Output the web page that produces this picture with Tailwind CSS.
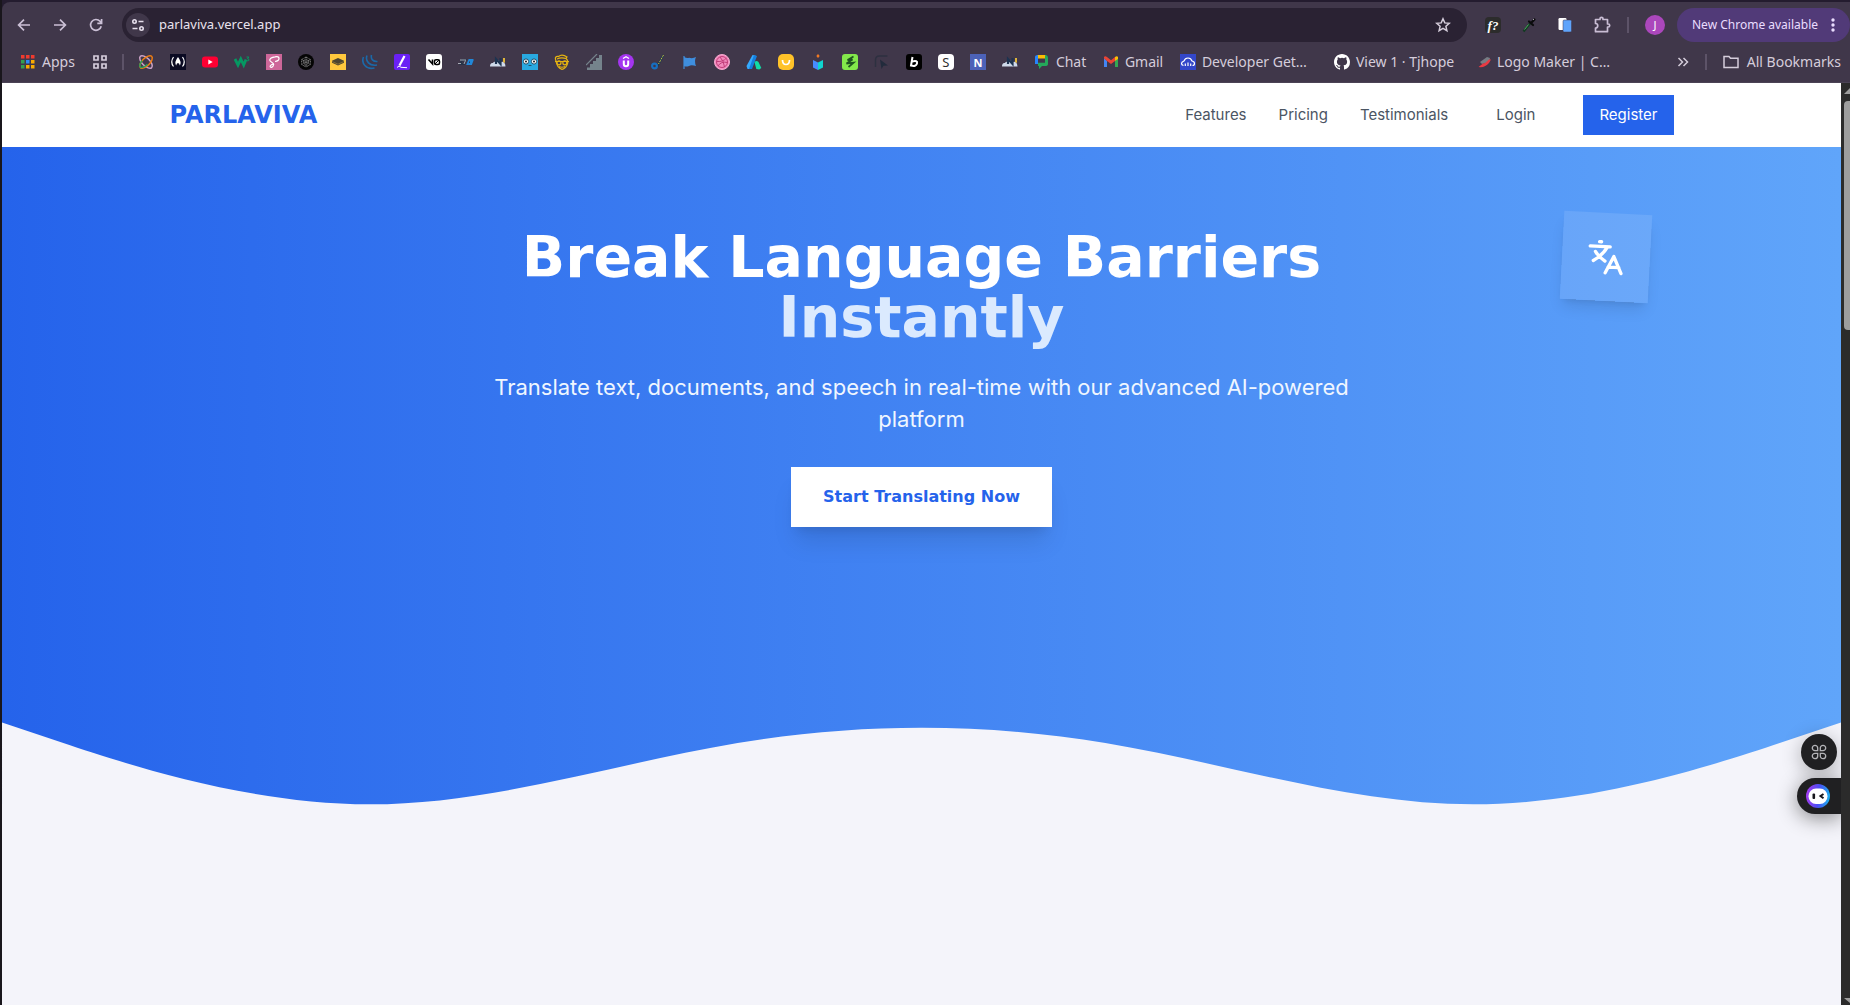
<!DOCTYPE html>
<html lang="en">
<head>
<meta charset="utf-8">
<meta name="viewport" content="width=device-width, initial-scale=1">
<title>Parlaviva</title>
<script src="https://cdn.jsdelivr.net/npm/@tailwindcss/browser@4"></script>
</head>
<body class="flex h-screen flex-col overflow-hidden bg-[#19161c] pl-[2px] font-['Inter',sans-serif]">

<!-- Browser toolbar -->
<div class="shrink-0 bg-[#241c2f] pt-[2px]">
  <header class="flex h-[81px] flex-col rounded-tl-lg border-b border-[#4b4355] bg-[#40374a] font-['Noto_Sans',sans-serif] text-[#d5cddb]">
    <div class="flex h-[46px] items-center">
      <div class="flex w-[120px] shrink-0 items-center gap-5 pl-[14px] text-[#cbc0d6]">
        <button aria-label="Back" class="size-4"><svg viewBox="0 0 16 16" class="size-4" fill="none" stroke="currentColor" stroke-width="1.7"><path d="M14 8H2.8M8 2.6 2.6 8 8 13.4"/></svg></button>
        <button aria-label="Forward" class="size-4"><svg viewBox="0 0 16 16" class="size-4" fill="none" stroke="currentColor" stroke-width="1.7"><path d="M2 8h11.2M8 2.6 13.4 8 8 13.4"/></svg></button>
        <button aria-label="Reload" class="size-4"><svg viewBox="0 0 16 16" class="size-4" fill="none" stroke="currentColor" stroke-width="1.7"><path d="M13.2 9.2A5.4 5.4 0 1 1 12 4.3L13.4 6M13.6 2v4.3H9.3"/></svg></button>
      </div>
      <div class="flex h-[34px] min-w-0 flex-1 items-center rounded-full bg-[#2a2233] pl-1 pr-4">
        <button aria-label="Site information" class="grid size-6 place-items-center rounded-full bg-[#40374a] text-[#e6dfec]"><svg viewBox="0 0 16 16" class="size-4" fill="none" stroke="currentColor" stroke-width="1.6"><circle cx="4.500" cy="4.500" r="1.700"/><path d="M8.500 4.500h5M2.500 11.500h5"/><circle cx="11.500" cy="11.500" r="1.700"/></svg></button>
        <input aria-label="Address" value="parlaviva.vercel.app" class="ml-[9px] min-w-0 flex-1 bg-transparent text-[13px] text-[#e9e2ee] outline-none">
        <button aria-label="Bookmark this page"><svg viewBox="0 0 16 16" class="size-4" fill="none" stroke="#d5cddb" stroke-width="1.5"><path d="m8 1.800 1.800 4.100 4.500.4-3.400 3 1 4.400L8 11.400l-3.900 2.300 1-4.400-3.400-3 4.500-.4z"/></svg></button>
      </div>
      <div class="flex shrink-0 items-center pl-[18px]">
        <button aria-label="Font finder" class="grid size-4 place-items-center rounded-sm bg-[#2c2c2c] font-['Liberation_Serif',serif] text-[13px] leading-none font-bold text-white italic">f?</button>
        <button aria-label="Colour picker" class="ml-5"><svg viewBox="0 0 16 16" class="size-4"><path d="M2.500 14.500 9 6.500" stroke="#123b22" stroke-width="2.200"/><path d="m3.500 12.500 4-5" stroke="#4fae62" stroke-width="1"/><path d="m8 4.500 4 3.500M10 6 13.500 2.500" stroke="#0b0b0d" stroke-width="2.200" stroke-linecap="round"/><path d="m12 3 1-1" stroke="#aaa"/></svg></button>
        <button aria-label="Copy" class="ml-5"><svg viewBox="0 0 16 16" class="size-4"><rect x="1.500" y="1" width="8" height="12" rx="1.200" fill="#fff"/><rect x="6" y="3" width="8.500" height="12" rx="1.200" fill="#5fa4fb" stroke="#40374a" stroke-width=".5"/></svg></button>
        <button aria-label="Extensions" class="ml-5"><svg viewBox="0 0 18 18" class="size-[18px]" fill="none" stroke="#c9bdd4" stroke-width="1.700" stroke-linejoin="round"><path d="M2.500 3.500H7V2.800a1.500 1.500 0 0 1 3 0v.7h4.500V8h.7a1.500 1.500 0 0 1 0 3h-.7v4.700h-12V12a2.200 2.200 0 0 0 0-4.500z"/></svg></button>
        <span class="ml-4 h-4 w-[2px] bg-[#5d5368]"></span>
        <button aria-label="Profile" class="ml-4 grid size-5 place-items-center rounded-full bg-[#ab47bc] text-[11px] text-white">J</button>
        <button class="ml-3 flex h-[34px] w-[173px] items-center justify-between rounded-full bg-[#513a78] pr-[15px] pl-[15px] text-xs whitespace-nowrap text-[#eaddff]">New Chrome available
          <svg viewBox="0 0 4 16" class="h-4 w-1" fill="currentColor"><circle cx="2" cy="3" r="1.700"/><circle cx="2" cy="8" r="1.700"/><circle cx="2" cy="13" r="1.700"/></svg></button>
      </div>
    </div>

    <!-- Bookmarks bar -->
    <nav aria-label="Bookmarks" class="flex h-[28px] items-center text-sm whitespace-nowrap">
      <a href="#" class="flex items-center gap-[6px] pl-[18px]"><svg viewBox="0 0 16 16" class="size-4"><path d="M1 1h3.500v3.500H1zM6 1h3.500v3.500H6zM11 1h3.500v3.500H11z" fill="#f03a2e"/><path d="M1 6h3.500v3.500H1zM1 11h3.500v3.500H1z" fill="#34a04f"/><path d="M6 6h3.500v3.500H6z" fill="#2c8bf5"/><path d="M6 11h3.500v3.500H6zM11 6h3.500v3.500H11zM11 11h3.500v3.500H11z" fill="#f9ab00"/></svg>Apps</a>
      <a href="#" aria-label="Tab groups" class="ml-[17px]"><svg viewBox="0 0 16 16" class="size-4" fill="none" stroke="#d5cddb" stroke-width="1.700"><path d="M2 2h4v4H2zM10 2h4v4h-4zM2 10h4v4H2zM10 10h4v4h-4z"/></svg></a>
      <span class="mx-[14px] h-4 w-[2px] bg-[#5d5368]"></span>
      <div class="flex gap-4">
        <a href="#" aria-label="Orbit"><svg viewBox="0 0 16 16" class="size-4" fill="none" stroke-width="1.500"><ellipse cx="8" cy="8" rx="8" ry="3.800" transform="rotate(45 8 8)" stroke="#cfa4c9"/><ellipse cx="8" cy="8" rx="8" ry="3.800" transform="rotate(-45 8 8)" stroke="#ef7d12"/><path d="M4 6.500Q.5 11.500 2.500 13.300q3 1 7-3" stroke="#2a9d5b"/></svg></a>
        <a href="#" aria-label="freeCodeCamp"><svg viewBox="0 0 16 16" class="size-4"><path fill="#0a0a23" d="M0 0h16v16H0z"/><path d="M3.500 3Q0 8 3.500 12.500M12.500 3Q16 8 12.500 12.500" fill="none" stroke="#fff" stroke-width="1.200"/><path d="M8 3Q4 8 6.200 11.500Q6.500 9 8 9t1.800 2.500Q12 8 8 3z" fill="#fff"/></svg></a>
        <a href="#" aria-label="YouTube"><svg viewBox="0 0 16 16" class="size-4"><rect y="2.500" width="16" height="11" rx="3" fill="#ff0033"/><path d="M6.300 5.500v5L10.700 8z" fill="#fff"/></svg></a>
        <a href="#" aria-label="W3Schools"><svg viewBox="0 0 16 16" class="size-4" fill="none" stroke="#059862"><path d="m1 5 3 6 2.800-6 2.900 6L12 5.500" stroke-width="2.800"/><path d="M12.500 3h2.300l-1.300 1.700q2 0 1.200 1.800-1 .7-2 0" stroke-width="1"/></svg></a>
        <a href="#" aria-label="Sass"><svg viewBox="0 0 16 16" class="size-4"><path fill="#cd6799" d="M0 0h16v16H0z"/><path d="M9 7.500q4-.5 4-3T9 2.800q-5 .7-5.300 3.300c0 2 4.300 2.200 4 4.400-.6 3.500-4 3.500-3.500 1.500Q5 10.500 7.500 10" fill="none" stroke="#fff" stroke-width="1.200"/></svg></a>
        <a href="#" aria-label="Perplex"><svg viewBox="0 0 16 16" class="size-4"><circle cx="8" cy="8" r="8" fill="#050505"/><g fill="none" stroke="#858585" stroke-width="1" stroke-dasharray="1 .6"><path d="m8 3 4.300 2.500v5L8 13l-4.300-2.500v-5zM3.700 5.500l8.600 5M12.300 5.500l-8.600 5M8 3v10"/><circle cx="8" cy="8" r="2.500"/></g></svg></a>
        <a href="#" aria-label="Layers"><svg viewBox="0 0 16 16" class="size-4"><path fill="#ffc83d" d="M0 0h16v16H0z"/><path d="m8 4 6 2.700v2L8 11.500l-6-2.800v-2z" fill="#4b4430"/><path d="m2 7.500 6 2.700 6-2.700" stroke="#a18234" stroke-width=".7" fill="none"/></svg></a>
        <a href="#" aria-label="jQuery"><svg viewBox="0 0 16 16" class="size-4" fill="none" stroke="#1b69a8" stroke-width="1.600"><path d="M1.500 3C-1 9 4 16 12.500 14M5 1.500C3 7 7.500 12.500 15 11M9.500 1C8.500 5 11 7.800 15.500 7.500"/></svg></a>
        <a href="#" aria-label="Pen"><svg viewBox="0 0 16 16" class="size-4"><rect width="16" height="16" rx="2" fill="#6a20f5"/><path d="m10.500 2-5 9.500" stroke="#fff" stroke-width="2.200"/><path d="m3 13.500 2-1.500 2 1.300 6 .4" stroke="#fff" fill="none"/></svg></a>
        <a href="#" aria-label="v0"><svg viewBox="0 0 16 16" class="size-4"><rect width="16" height="16" rx="3" fill="#fff"/><path d="M2.500 5.500 6.500 10V5.500" fill="none" stroke="#000" stroke-width="1.600"/><rect x="8.500" y="5.800" width="5" height="4.700" rx="1.500" fill="none" stroke="#000" stroke-width="1.500"/><path d="m9 10 4-4" stroke="#000"/></svg></a>
        <a href="#" aria-label="OG"><svg viewBox="0 0 16 16" class="size-4" fill="none"><path d="M4 6h3.500l-1.500 4H2.500z" stroke="#273347" stroke-width="2"/><path d="M0 9.500h3M2 6h6M6 10l1.500-3.500" stroke="#c5c9d2" stroke-width=".8"/><path d="M15.500 6h-4.300l-1.700 4h3.700l.8-2h-2" stroke="#2187d8" stroke-width="1.800"/></svg></a>
        <a href="#" aria-label="N cloud"><svg viewBox="0 0 16 16" class="size-4"><path d="M0 12.500q0-4 3-3.500 1-2 3-1 2-3 5 0 4-1 4.500 4.500z" fill="#cfdaea"/><path d="M6 10V5l4.500 5V4" fill="none" stroke="#1d3350" stroke-width="2.200"/><path d="M13 4h2v5l-2-1z" fill="#dfb53b"/></svg></a>
        <a href="#" aria-label="Robot"><svg viewBox="0 0 16 16" class="size-4"><path fill="#29a9e1" d="M0 0h16v16H0z"/><circle cx="4" cy="7.500" r="2.600" fill="#fff" stroke="#20506c"/><circle cx="12" cy="7.500" r="2.600" fill="#fff" stroke="#20506c"/><circle cx="4" cy="7.500" r=".9"/><circle cx="12" cy="7.500" r=".9"/><path d="M6.500 11.500h3" stroke="#20506c"/></svg></a>
        <a href="#" aria-label="Face"><svg viewBox="0 0 16 16" class="size-4" fill="none" stroke="#e5b311" stroke-width="1.200"><path d="M2 7Q0 2 4.500 2.500 8-.5 13 3l-1 1.500Q15 7 13 11t-5 4.300Q3 14 2 7zM3 5q4-2 9-.5M5 12.500q3 1.500 6 0M1 7.500h14"/><circle cx="5" cy="8.800" r="2"/><circle cx="10.800" cy="8.800" r="2"/></svg></a>
        <a href="#" aria-label="Stairs"><svg viewBox="0 0 16 16" class="size-4"><path d="M1 16v-2.500h3V10h3V7h3V4h3V1h3v15z" fill="#75838c"/><path d="M0 11 11 0" stroke="#75838c" stroke-width="1.200"/></svg></a>
        <a href="#" aria-label="Udemy"><svg viewBox="0 0 16 16" class="size-4" fill="none" stroke="#fff"><circle cx="8" cy="8" r="8" fill="#a435f0" stroke="none"/><path d="m5 4.500 3-1.700 3 1.700" stroke-width="1.300"/><path d="M5.800 6.500V10q0 2.200 2.200 2.200t2.200-2.200V6.500" stroke-width="2"/></svg></a>
        <a href="#" aria-label="Brush"><svg viewBox="0 0 16 16" class="size-4" fill="none"><path d="M13.500 1 7 13" stroke="#17394f" stroke-width="1.800"/><path d="M13.500 1 8.500 10" stroke="#cabb42" stroke-width="1" stroke-dasharray="2 1"/><circle cx="4.500" cy="12" r="2.400" stroke="#176fc1" stroke-width="2.200"/></svg></a>
        <a href="#" aria-label="Flag"><svg viewBox="0 0 16 16" class="size-4"><path d="M2 2v13" stroke="#3f8ede" stroke-width="1.200"/><path d="M2 3q3 1.500 5 .8 4 1 7-.8-2 4 0 9-5-1.500-7 0-3 1-5 0z" fill="#3f8ede"/></svg></a>
        <a href="#" aria-label="Dribbble"><svg viewBox="0 0 16 16" class="size-4" fill="none" stroke="#c13d79"><circle cx="8" cy="8" r="7.500" fill="#f28bbd" stroke="#f6a8cf"/><circle cx="8" cy="8" r="5.500"/><path d="M6 3q4 4 4.500 10M3 7.500q6 .5 9.500-3.500M4 12q3-5 9.500-3.500"/></svg></a>
        <a href="#" aria-label="AdSense"><svg viewBox="0 0 16 16" class="size-4"><path d="m6.500 1 3 .5L5 15H1.500L.5 12z" fill="#35aaff"/><path d="m8 1 3 1-5 13H3z" fill="#147fe0"/><path d="M8.500 8q2-2 4 0l2.800 6-2 1.500-3-.5z" fill="#12dba5"/></svg></a>
        <a href="#" aria-label="Smile"><svg viewBox="0 0 16 16" class="size-4"><rect width="16" height="16" rx="5" fill="#ffc229"/><path d="M4.500 6q0 4.500 3.500 4.500T11.500 6" fill="none" stroke="#fff" stroke-width="1.700"/></svg></a>
        <a href="#" aria-label="Cube"><svg viewBox="0 0 16 16" class="size-4"><path d="m3 6 5 2.500V16l-5-2.500z" fill="#478cff"/><path d="m13 6-5 2.500V16l5-2.500z" fill="#10d5cf"/><path d="m8 0 1.700 2L8 4 6.300 2z" fill="#f37922"/></svg></a>
        <a href="#" aria-label="Leaf"><svg viewBox="0 0 16 16" class="size-4"><rect width="16" height="16" rx="3" fill="#83e84b"/><path d="m11.500 2.500-6 3.500 5-.5-6 4 7-.8-5 4.300" fill="none" stroke="#1f5520" stroke-width="1.800"/></svg></a>
        <a href="#" aria-label="Cursor"><svg viewBox="0 0 16 16" class="size-4"><path d="M1.500 13V6q0-4 4-4h8" fill="none" stroke="#2d3040" stroke-width="1.500"/><path d="m6 5.500 8 6-4.500.3-2 3.200z" fill="#222b3c"/></svg></a>
        <a href="#" aria-label="B"><svg viewBox="0 0 16 16" class="size-4"><rect width="16" height="16" rx="3" fill="#000"/><path d="M6.500 3 5 11.500q5 1.500 6-2T6 7.500" fill="none" stroke="#fff" stroke-width="2"/></svg></a>
        <a href="#" aria-label="S" class="grid size-4 place-items-center rounded-sm bg-white text-[13px] leading-none text-[#303030]">S</a>
        <a href="#" aria-label="N" class="grid size-4 place-items-center bg-[#4c62b8] text-[11px] leading-none font-bold text-white">N</a>
        <a href="#" aria-label="N cloud"><svg viewBox="0 0 16 16" class="size-4"><path d="M0 12.500q0-4 3-3.500 1-2 3-1 2-3 5 0 4-1 4.500 4.500z" fill="#cfdaea"/><path d="M6 10V5l4.500 5V4" fill="none" stroke="#1d3350" stroke-width="2.200"/><path d="M13 4h2v5l-2-1z" fill="#dfb53b"/></svg></a>
      </div>
      <a href="#" class="ml-4 flex w-[69px] items-center gap-[6px]"><svg viewBox="0 0 16 16" class="size-4"><path d="M3 1h9v4H3z" fill="#fbbc04"/><path d="M1 3q0-2 3-2v9H1z" fill="#2684fc"/><path d="M11 5V1q3 0 3 3v6q0 2-3 2H8l-3 3v-3H4V8.500h7z" fill="#24a95a"/><path d="M4 4.500h7v4H4z" fill="#40374a"/></svg>Chat</a>
      <a href="#" class="flex w-[77px] items-center gap-[6px]"><svg viewBox="0 0 16 16" class="size-4"><path d="M1 4v9h3V7z" fill="#4285f4"/><path d="M15 4v9h-3V7z" fill="#34a853"/><path d="M1 3q1-1.500 3 0l4 3.200L12 3v4l-4 3-4-3-3-2.500z" fill="#ea4335"/><path d="m12 3q2-1.500 3 0v2l-3 2z" fill="#fbbc04"/></svg>Gmail</a>
      <a href="#" class="flex w-[154px] items-center gap-[6px]"><svg viewBox="0 0 16 16" class="size-4"><path fill="#3347c9" d="M0 0h16v16H0z"/><path d="M3.500 11.500Q1.500 11 1.500 9.500T4 7q1-3 4-3t4 3q2.500.5 2.500 2.500t-2 2M5.300 12V9.500M8 12V8.500M10.700 12V9.500" fill="none" stroke="#fff" stroke-width="1.200"/></svg>Developer Get…</a>
      <a href="#" class="flex w-[143px] items-center gap-[6px]"><svg viewBox="0 0 16 16" class="size-4" fill="#fff"><path d="M8 0C3.580 0 0 3.580 0 8c0 3.540 2.290 6.530 5.470 7.590.4.070.55-.17.55-.38 0-.19-.010-.82-.010-1.490-2.010.37-2.530-.49-2.690-.94-.09-.23-.48-.94-.82-1.130-.28-.15-.68-.52-.01-.53.63-.01 1.080.58 1.230.82.72 1.210 1.870.87 2.330.66.070-.52.28-.87.51-1.070-1.780-.2-3.640-.89-3.640-3.950 0-.87.31-1.590.82-2.150-.08-.2-.36-1.020.08-2.120 0 0 .67-.21 2.200.82a7.600 7.600 0 0 1 4 0c1.530-1.040 2.200-.82 2.200-.82.44 1.100.16 1.920.08 2.120.51.56.82 1.270.82 2.150 0 3.070-1.870 3.750-3.650 3.950.29.25.54.73.54 1.480 0 1.070-.01 1.930-.01 2.200 0 .21.15.46.55.38A8 8 0 0 0 16 8c0-4.420-3.580-8-8-8"/></svg>View 1 · Tjhope</a>
      <a href="#" class="flex items-center gap-1"><svg viewBox="0 0 16 16" class="size-4"><path d="m3 8 7-5 3 1-1 4-7 2z" fill="#777c84"/><path d="M1.500 13 6 9.500l2-.5 4-3.500h2L12 9q-4 5-10.500 4z" fill="#e83a43"/></svg>Logo Maker | C…</a>
      <div class="ml-auto flex items-center pr-[9px]">
        <button aria-label="More bookmarks"><svg viewBox="0 0 12 12" class="size-3" fill="none" stroke="currentColor" stroke-width="1.500"><path d="m1.500 2 4 4-4 4M6.500 2l4 4-4 4"/></svg></button>
        <span class="mx-4 h-4 w-[2px] bg-[#5d5368]"></span>
        <a href="#" class="flex items-center gap-2"><svg viewBox="0 0 16 16" class="size-4" fill="none" stroke="currentColor" stroke-width="1.500"><path d="M1 2.500h5l1.500 1.700H15v9.300H1z"/></svg>All Bookmarks</a>
      </div>
    </nav>
  </header>
</div>

<!-- Page and its scrollbar -->
<div class="flex min-h-0 flex-1">
  <div class="relative flex min-w-0 flex-1 flex-col overflow-hidden bg-[#f4f4fa]">
    <header class="shrink-0 bg-white">
      <div class="mx-auto flex h-16 max-w-[1536px] items-center justify-between px-4">
        <a href="#" class="font-['DejaVu_Sans',sans-serif] text-2xl font-bold text-[#2563eb]">PARLAVIVA</a>
        <nav aria-label="Main" class="flex items-center text-[15px] text-[#4b5563]">
          <div class="flex gap-8">
            <a href="#">Features</a>
            <a href="#">Pricing</a>
            <a href="#">Testimonials</a>
          </div>
          <a href="#" class="ml-12">Login</a>
          <a href="#" class="ml-12 flex h-10 items-center bg-[#2563eb] px-4 text-white">Register</a>
        </nav>
      </div>
    </header>

    <section class="relative shrink-0 bg-linear-to-r/srgb from-[#2563eb] to-[#60a5fa]">
      <div class="relative mx-auto max-w-[1536px] px-4 pt-20 text-center">
        <h1 class="mx-auto max-w-4xl font-['DejaVu_Sans',sans-serif] text-[57px] leading-[60px] font-bold text-white">Break Language Barriers <span class="block text-[#dbeafe]">Instantly</span></h1>
        <p class="mx-auto mt-6 max-w-4xl text-[22px] leading-8 text-[#eff6ff]">Translate text, documents, and speech in real-time with our advanced AI-powered platform</p>
        <a href="#" class="mt-8 inline-flex h-[60px] items-center bg-white px-8 font-['DejaVu_Sans',sans-serif] text-base font-bold text-[#2563eb] shadow-xl">Start Translating Now</a>
        <div class="absolute top-[66px] right-10 rotate-3 bg-white/10 p-6 shadow-lg">
          <svg viewBox="0 0 24 24" class="size-10" fill="none" stroke="#fff" stroke-width="2" stroke-linecap="round"><path d="M2.200 5.800h12M7.700 3h1.200M12.500 6Q10 11 4.500 14.500M5.500 9q2 3 6 5.500M12 21.500l4.700-10 4.800 10M13.500 18h6.500" stroke-linejoin="round"/></svg>
        </div>
      </div>
      <svg viewBox="0 0 1440 320" aria-hidden="true" class="mt-[73px] block w-full"><path fill="#f4f4fa" d="M0,96L48,112C96,128,192,160,288,160C384,160,480,128,576,112C672,96,768,96,864,112C960,128,1056,160,1152,160C1248,160,1344,128,1392,112L1440,96V320H0Z"/></svg>
    </section>

    <!-- Floating assistant buttons -->
    <div class="absolute top-[651px] right-0 flex flex-col items-end gap-2">
      <button aria-label="Tools" class="mr-1 grid size-9 place-items-center rounded-full bg-[#202022] shadow-[0_4px_20px_rgba(0,0,0,0.3)]"><svg viewBox="0 0 16 16" class="size-4" fill="none" stroke="#b4b4b8" stroke-width="1.300"><path d="M6.700 6.700H4a2.700 2.700 0 1 1 2.700-2.700zM9.300 6.700V4A2.700 2.700 0 1 1 12 6.700zM6.700 9.300V12A2.700 2.700 0 1 1 4 9.300zM9.300 9.300H12A2.700 2.700 0 1 1 9.300 12z"/></svg></button>
      <button aria-label="Assistant" class="flex h-9 w-11 items-center rounded-l-full bg-[#202022] pl-[9px] shadow-[0_4px_20px_rgba(0,0,0,0.45)]"><svg viewBox="0 0 24 24" class="size-6"><defs><linearGradient id="ring" x1="0" y1=".7" x2="1" y2=".8"><stop stop-color="#a13bf0"/><stop offset=".5" stop-color="#4a4df2"/><stop offset="1" stop-color="#18b8f0"/></linearGradient></defs><circle cx="12" cy="12" r="12" fill="url(#ring)"/><rect x="2.500" y="4.500" width="19" height="15.500" rx="7.500" fill="#fff"/><rect x="6.500" y="9.500" width="2.600" height="5.500" rx="1" fill="#16161c"/><path d="m17.500 10-3 2 3 2.200" fill="none" stroke="#16161c" stroke-width="2"/></svg></button>
    </div>
  </div>
  <div class="flex w-[9px] shrink-0 flex-col bg-[#2b2b2b] pl-[3px]" aria-hidden="true">
    <svg viewBox="0 0 6 18" class="h-[18px] w-[6px]"><path d="M0 11 6 5v6z" fill="#9d9d9d"/></svg>
    <div class="h-[229px] rounded-l-[4px] bg-[#9d9d9d]"></div>
    <svg viewBox="0 0 6 8" class="mt-auto h-2 w-[6px]"><path d="M0 1h6v5z" fill="#9d9d9d"/></svg>
  </div>
</div>
</body>
</html>
